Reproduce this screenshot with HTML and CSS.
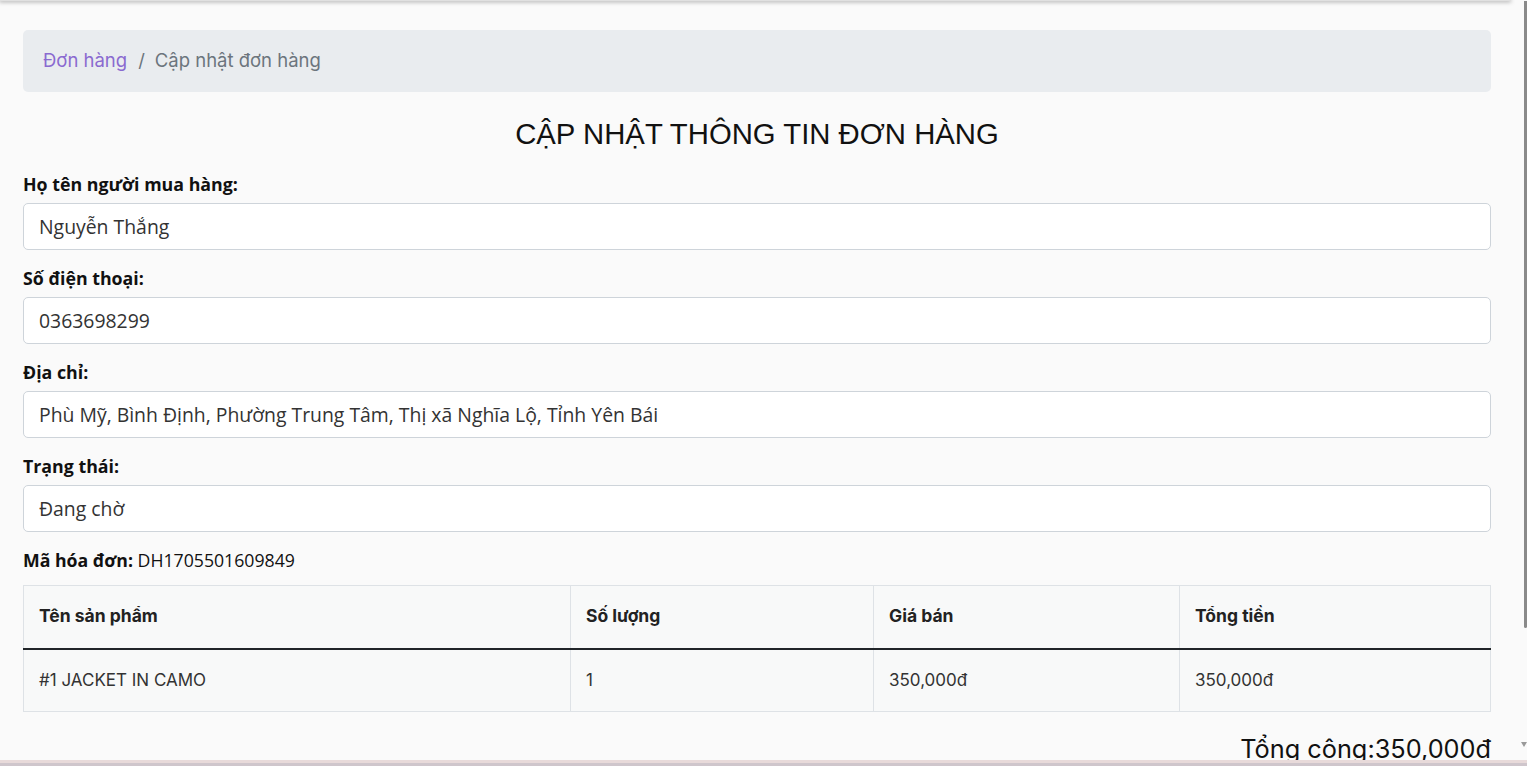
FILE: index.html
```html
<!DOCTYPE html>
<html lang="vi">
<head>
<meta charset="utf-8">
<title>Cập nhật đơn hàng</title>
<link rel="stylesheet" href="styles.css">
</head>
<body>
<div class="frame">
  <div class="topshadow"></div>
  <div class="viewport">
    <main class="content">
      <nav class="breadcrumb">
        <a href="#" class="crumb-link">Đơn hàng</a>
        <span class="crumb-sep">/</span>
        <span class="crumb-active">Cập nhật đơn hàng</span>
      </nav>
      <h1 class="title">CẬP NHẬT THÔNG TIN ĐƠN HÀNG</h1>
      <div class="group">
        <label class="label">Họ tên người mua hàng:</label>
        <div class="input">Nguyễn Thắng</div>
      </div>
      <div class="group">
        <label class="label">Số điện thoại:</label>
        <div class="input">0363698299</div>
      </div>
      <div class="group">
        <label class="label">Địa chỉ:</label>
        <div class="input">Phù Mỹ, Bình Định, Phường Trung Tâm, Thị xã Nghĩa Lộ, Tỉnh Yên Bái</div>
      </div>
      <div class="group">
        <label class="label">Trạng thái:</label>
        <div class="input">Đang chờ</div>
      </div>
      <p class="invoice"><b>Mã hóa đơn:</b> DH1705501609849</p>
      <table class="items">
        <thead>
          <tr>
            <th class="c1">Tên sản phẩm</th>
            <th class="c2">Số lượng</th>
            <th class="c3">Giá bán</th>
            <th class="c4">Tổng tiền</th>
          </tr>
        </thead>
        <tbody>
          <tr>
            <td>#1 JACKET IN CAMO</td>
            <td>1</td>
            <td>350,000đ</td>
            <td>350,000đ</td>
          </tr>
        </tbody>
      </table>
      <div class="total">Tổng cộng:350,000đ</div>
    </main>
    <div class="scrollbar">
      <div class="thumb"></div>
      <div class="arrow"></div>
    </div>
  </div>
  <div class="bottombar"></div>
</div>
</body>
</html>
```

FILE: styles.css
```css
* { box-sizing: border-box; }
html, body { margin: 0; padding: 0; }
body {
  background: #fafafa;
  font-family: "Open Sans", "Noto Sans", sans-serif;
  color: #212529;
  overflow: hidden;
}
.frame {
  height: 766px;
  display: flex;
  flex-direction: column;
  overflow: hidden;
}
.topshadow {
  height: 1px;
  width: 1510px;
  background: #e0e0e0;
  box-shadow: 0 0 4px 1px rgba(0,0,0,0.35);
  flex: none;
  position: relative;
  z-index: 1;
}
.viewport {
  flex: 1;
  display: flex;
  min-height: 0;
}
.content {
  flex: 1;
  padding: 29px 23px 0 23px;
  min-width: 0;
}
.scrollbar {
  width: 13px;
  flex: none;
  display: flex;
  flex-direction: column;
  align-items: flex-end;
  background: #fafafa;
}
.thumb {
  width: 3px;
  height: 627px;
  background: #8a8a8a;
  border-radius: 0 0 2px 2px;
}
.arrow {
  margin-top: 114px;
  width: 0;
  height: 0;
  border-left: 3px solid transparent;
  border-right: 3px solid transparent;
  border-top: 5px solid #9a9a9a;
}
.bottombar {
  height: 6px;
  flex: none;
  background: linear-gradient(#e8dada 0 3px, #cfc6cc 3px 6px);
}
.breadcrumb {
  height: 62px;
  background: #e9ecef;
  border-radius: 5px;
  display: flex;
  align-items: center;
  padding: 0 20px 2px;
  font-family: "Inter", "Lato", sans-serif;
  font-size: 18.5px;
  color: #6c757d;
}
.crumb-link { color: #8a6ad0; text-decoration: none; }
.crumb-sep { margin: 0 10px 0 11px; color: #6c757d; }
.title {
  margin: 22px 0 18px;
  text-align: center;
  font-family: "Liberation Sans", Arial, sans-serif;
  font-weight: 400;
  font-size: 29.3px;
  line-height: 40px;
  color: #111;
}
.group { margin-bottom: 16px; }
.label {
  display: block;
  font-weight: 700;
  font-size: 17.8px;
  line-height: 24px;
  margin-bottom: 7px;
  color: #111;
}
.input {
  height: 47px;
  background: #fff;
  border: 1px solid #ced4da;
  border-radius: 5px;
  padding: 0 15px;
  display: flex;
  align-items: center;
  font-size: 19.4px;
  color: #333;
}
.invoice {
  margin: 16px 0 13px;
  font-size: 17.7px;
  line-height: 24px;
  color: #111;
}
.invoice b { font-weight: 700; }
.items {
  width: 100%;
  border-collapse: collapse;
  font-family: "Inter", "Lato", sans-serif;
  background: #f8f9f9;
}
.items th, .items td {
  border: 1px solid #dee2e6;
  text-align: left;
  padding: 0 15px;
}
.items th {
  height: 63px;
  padding-bottom: 3px;
  font-weight: 700;
  font-size: 17.5px;
  color: #222;
  border-bottom: 2px solid #212529;
}
.items td {
  height: 63px;
  font-size: 17px;
  color: #333;
}
.c1 { width: 547px; }
.c2 { width: 303px; }
.c3 { width: 306px; }
.total {
  margin-top: 19px;
  text-align: right;
  font-family: "Inter", "Lato", sans-serif;
  font-size: 25.3px;
  line-height: 36px;
  color: #111;
}
```
